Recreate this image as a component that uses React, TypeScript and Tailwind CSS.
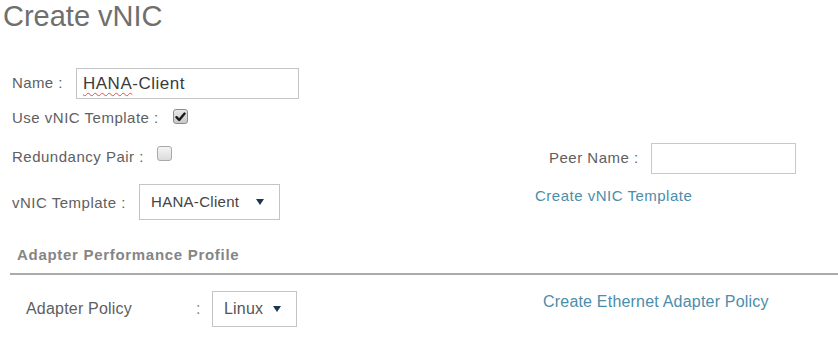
import React from 'react';

function Arrow() {
  return (
    <svg width="8" height="6" viewBox="0 0 8 6" className="shrink-0">
      <polygon points="0,0 8,0 4,6" fill="#1c3553" />
    </svg>
  );
}

function Checkbox({ checked }: { checked?: boolean }) {
  return (
    <span
      className={
        checked
          ? 'flex h-[15px] w-[15px] items-center justify-center rounded-[3px] border border-[#8c8c8c] bg-gradient-to-b from-[#e8e8e8] to-[#c9c9c9]'
          : 'flex h-[15px] w-[15px] items-center justify-center rounded-[3px] border border-[#a9a9a9] bg-gradient-to-b from-[#f4f4f4] to-[#dcdcdc]'
      }
    >
      {checked && (
        <svg width="11" height="10" viewBox="0 0 11 10">
          <path d="M1.5 5.2 L4.2 8 L9.6 1.6" fill="none" stroke="#1a1a1a" strokeWidth="2.4" strokeLinecap="round" strokeLinejoin="round" />
        </svg>
      )}
    </span>
  );
}

export default function App() {
  return (
    <div className="w-[838px] h-[346px] overflow-hidden bg-white font-['Liberation_Sans',Arial,sans-serif] text-[#606060]">
      {/* Title */}
      <h1 className="pl-[3px] pt-[2px] text-[29px] leading-[29px] font-normal text-[#6f6f6f]">Create vNIC</h1>

      <div className="pl-[12px] mt-[37px]">
        {/* Name */}
        <div className="flex items-center h-[31px] text-[15px] tracking-[0.4px]">
          <span className="w-[64px]">Name :</span>
          <div className="flex items-center w-[223px] h-[31px] border border-[#c4c4c4] pl-[6px] text-[17px] tracking-[0.5px] text-[#3b3b3b]">
            <span className="underline decoration-wavy decoration-[#d9534f] decoration-1 underline-offset-[3px]">HANA</span>
            <span>-Client</span>
          </div>
        </div>

        {/* Use vNIC Template */}
        <div className="flex items-center h-[20px] mt-[9px] text-[15px] tracking-[0.5px]">
          <span className="w-[161px]">Use vNIC Template :</span>
          <span className="mb-[3px]">
            <Checkbox checked />
          </span>
        </div>

        {/* Redundancy Pair / Peer Name */}
        <div className="flex items-start h-[31px] mt-[15px] text-[15px] tracking-[0.5px]">
          <div className="flex items-start w-[537px]">
            <span className="w-[145px] mt-[5px] leading-[18px]">Redundancy Pair :</span>
            <span className="mt-[3px]">
              <Checkbox />
            </span>
          </div>
          <div className="flex items-center h-[31px]">
            <span className="w-[102px]">Peer Name :</span>
            <div className="w-[145px] h-[31px] border border-[#c9c9c9]" />
          </div>
        </div>

        {/* vNIC Template */}
        <div className="flex items-center h-[36px] mt-[10px] text-[15px] tracking-[0.5px]">
          <div className="flex items-center w-[523px]">
            <span className="w-[127px] pt-[2px]">vNIC Template :</span>
            <div className="flex items-center justify-between w-[141px] h-[36px] border border-[#c4c4c4] pl-[11px] pr-[15px] text-[#444] tracking-[0.3px]">
              <span>HANA-Client</span>
              <Arrow />
            </div>
          </div>
          <a className="mb-[12px] text-[#4b8dab] leading-[18px]">Create vNIC Template</a>
        </div>

        {/* Adapter Performance Profile */}
        <div className="pl-[5px] mt-[26px] text-[15px] leading-[18px] font-bold tracking-[0.7px] text-[#858585]">
          Adapter Performance Profile
        </div>
        <div className="-ml-[2px] mt-[9px] h-[2px] bg-[#ababab]" />

        <div className="flex items-center h-[36px] mt-[16px] pl-[14px] text-[16px] tracking-[0.2px]">
          <span className="w-[170px]">Adapter Policy</span>
          <span className="w-[16px] text-[#8a8a8a]">:</span>
          <div className="flex items-center justify-between w-[85px] h-[36px] border border-[#c4c4c4] pl-[11px] pr-[15px] text-[#555]">
            <span>Linux</span>
            <Arrow />
          </div>
          <a className="ml-[246px] mb-[14px] text-[#4b8dab] leading-[18px]">Create Ethernet Adapter Policy</a>
        </div>
      </div>
    </div>
  );
}
